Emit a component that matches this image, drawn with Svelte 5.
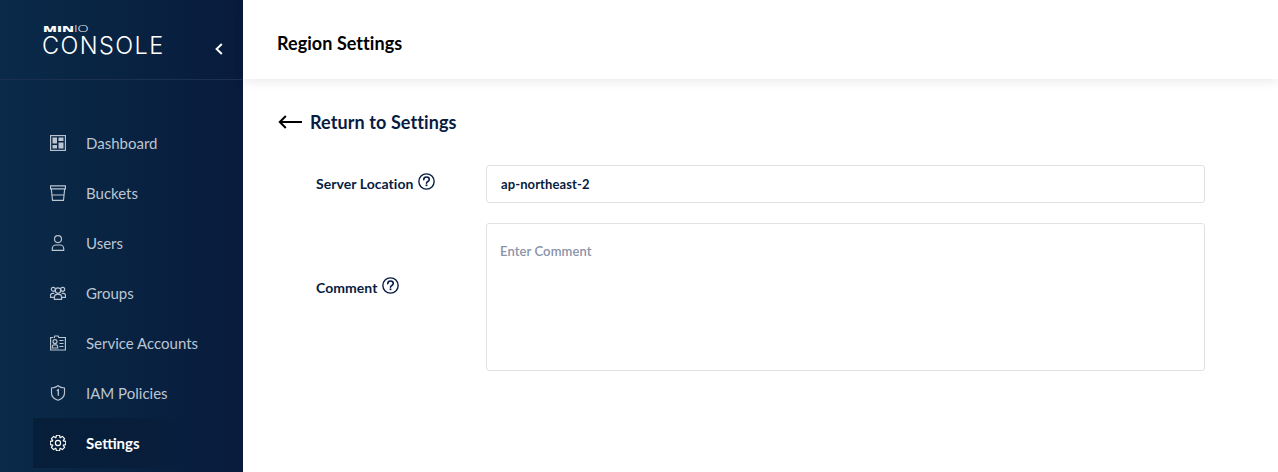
<script>
  const menu = [
    { label: 'Dashboard', icon: 'dashboard' },
    { label: 'Buckets', icon: 'buckets' },
    { label: 'Users', icon: 'users' },
    { label: 'Groups', icon: 'groups' },
    { label: 'Service Accounts', icon: 'accounts' },
    { label: 'IAM Policies', icon: 'policies' },
    { label: 'Settings', icon: 'settings', active: true }
  ];

  // eight rounded teeth round the settings cog
  const gear = (() => {
    const pts = [];
    for (let i = 0; i < 8; i++) {
      const a = (i * Math.PI) / 4;
      for (const [r, d] of [[5.6, -0.39], [7.9, -0.2], [7.9, 0.2], [5.6, 0.39]]) {
        const x = 8 + r * Math.sin(a + d);
        const y = 8 - r * Math.cos(a + d);
        pts.push(`${x.toFixed(2)} ${y.toFixed(2)}`);
      }
    }
    return 'M' + pts.join('L') + 'Z';
  })();
</script>

{#snippet help()}
  <svg class="help" viewBox="0 0 16 16" width="17" height="17" fill="none" stroke="#081c42" stroke-width="1.3">
    <circle cx="8" cy="8" r="7.2" />
    <path d="M5.400 6.300c0-1.500 1.100-2.500 2.600-2.500s2.600.9 2.600 2.300c0 2-2.600 1.800-2.600 3.600" stroke-linecap="round" stroke-width="1.500" />
    <path d="M8 10.800v1.600" stroke-width="1.700" />
  </svg>
{/snippet}

<div class="page">
  <aside class="sidebar">
    <div class="brand">
      <div class="logo">
        <div class="minio"><b>MIN</b>IO</div>
        <div class="console">CONSOLE</div>
      </div>
      <svg class="collapse" viewBox="0 0 8 12" width="8" height="12" fill="none" stroke="#fff" stroke-width="2">
        <path d="M6.800 1 1.600 6l5.200 5" />
      </svg>
    </div>
    <nav class="menu">
      {#each menu as item}
        <div class="item" class:active={item.active}>
          <svg class="icon" viewBox="0 0 16 16" width="16" height="16" fill="none" stroke="currentColor" stroke-width="1.150">
            {#if item.icon === 'dashboard'}
              <rect x=".6" y=".6" width="14.800" height="14.800" />
              <rect x="2.500" y="2.500" width="4.500" height="6" fill="currentColor" stroke="none" />
              <rect x="8.500" y="2.500" width="5" height="3.500" fill="currentColor" stroke="none" />
              <rect x="2.500" y="10" width="4.500" height="3.500" fill="currentColor" stroke="none" />
              <rect x="8.500" y="7.500" width="5" height="6" fill="currentColor" stroke="none" />
            {:else if item.icon === 'buckets'}
              <path d="M.6.800h14.800v3H.6zM1.300 3.800l1.200 11.600h11l1.200-11.600M2 10h12" />
            {:else if item.icon === 'users'}
              <circle cx="8" cy="4.100" r="3.500" />
              <path d="M2.300 15.400v-1.800c0-2 1.600-3.600 3.500-3.600h4.400c1.900 0 3.500 1.600 3.500 3.600v1.800z" />
            {:else if item.icon === 'groups'}
              <circle cx="8" cy="5.600" r="2.700" />
              <circle cx="3.300" cy="4.300" r="2" />
              <circle cx="12.700" cy="4.300" r="2" />
              <path d="M4.400 14.300v-2.100c0-1.600 1.200-2.800 2.700-2.800h1.800c1.500 0 2.700 1.200 2.700 2.800v2.100zM4.300 8.400H2.500C1.300 8.400.5 9.300.5 10.500v1.800h3.800M11.700 8.400h1.800c1.200 0 2 .9 2 2.100v1.800h-3.800" />
            {:else if item.icon === 'accounts'}
              <path d="M5 2.500H4.200L4.800 1h3.400l.6 1.500H15.400v12.500H.6V2.500H3" />
              <circle cx="5" cy="6.600" r="2" />
              <path d="M2.300 13v-1.300c0-1 .8-1.800 1.800-1.800h1.800c1 0 1.800.8 1.800 1.800V13zM9.500 5.500h4M9.500 8.500h4M9.500 11.500h4" />
            {:else if item.icon === 'policies'}
              <path d="M8 .7c1.800 1.400 4 2.200 6.500 2.300v5c0 3.300-2.600 5.900-6.500 7.300C4.100 14 1.500 11.300 1.500 8V3C4 2.900 6.200 2.100 8 .7z" />
              <path d="M6.800 5.700l1.500-1v6" stroke-width="1.300" />
            {:else}
              <circle cx="8" cy="8" r="2.600" />
              <path d={gear} stroke-linejoin="round" />
            {/if}
          </svg>
          <span>{item.label}</span>
        </div>
      {/each}
    </nav>
  </aside>

  <main class="main">
    <header class="header">Region Settings</header>
    <section class="content">
      <div class="back">
        <svg viewBox="0 0 24 14" width="24" height="14" fill="none" stroke="#000" stroke-width="2">
          <path d="M24 7H1.800M7.800 1 1.800 7l6 6" />
        </svg>
        <span>Return to Settings</span>
      </div>
      <div class="form">
        <div class="row">
          <div class="label">Server Location {@render help()}</div>
          <div class="field input">ap-northeast-2</div>
        </div>
        <div class="row">
          <div class="label comment">Comment {@render help()}</div>
          <div class="field textarea">Enter Comment</div>
        </div>
      </div>
    </section>
  </main>
</div>

<style>
  :global(body) {
    margin: 0;
    background: #fff;
    overflow: hidden;
  }
  .page {
    display: flex;
    height: 472px;
    font-family: Lato, sans-serif;
    color: #081c42;
  }
  .sidebar {
    width: 243px;
    flex-shrink: 0;
    background: linear-gradient(90deg, #0a2a49 0%, #092241 55%, #081b3d 100%);
    overflow: hidden;
  }
  .brand {
    height: 79px;
    border-bottom: 1px solid #1c3052;
    display: flex;
    justify-content: space-between;
    padding: 0 20px 0 43px;
  }
  .logo {
    padding-top: 25px;
    color: #fff;
  }
  .minio {
    font-family: 'Open Sans', sans-serif;
    font-size: 9px;
    line-height: 8px;
    font-weight: 300;
    transform: scaleX(1.600);
    transform-origin: left;
  }
  .minio b {
    font-weight: 800;
  }
  .console {
    font-family: Inter, sans-serif;
    font-size: 23.500px;
    line-height: 17px;
    margin: 4px 0 0 -1px;
    font-weight: 300;
    letter-spacing: 1.400px;
  }
  .collapse {
    margin-top: 43px;
  }
  .menu {
    padding: 38px 0 0 33px;
    display: flex;
    flex-direction: column;
  }
  .item {
    height: 50px;
    display: flex;
    align-items: center;
    padding-left: 17px;
    gap: 20px;
    font-size: 15px;
    color: #bcc6d2;
  }
  .icon {
    flex-shrink: 0;
  }
  .item.active {
    color: #fff;
    font-weight: 700;
    background: linear-gradient(90deg, rgba(6, 26, 52, 0.7) 0%, rgba(6, 26, 52, 0.5) 70%, rgba(6, 26, 52, 0) 100%);
    width: 137px;
  }
  .main {
    flex: 1;
    min-width: 0;
  }
  .header {
    height: 73px;
    padding: 6px 0 0 34px;
    display: flex;
    align-items: center;
    font-size: 18px;
    font-weight: 700;
    letter-spacing: 0.05px;
    color: #000;
    box-shadow: 0 3px 10px rgba(0, 0, 0, 0.08);
  }
  .content {
    padding: 31px 0 0 35px;
  }
  .back {
    display: flex;
    align-items: center;
    gap: 8px;
    font-size: 18px;
    font-weight: 700;
    letter-spacing: 0.1px;
    height: 24px;
  }
  .form {
    margin-top: 31px;
    display: flex;
    flex-direction: column;
    gap: 20px;
    padding-left: 38px;
  }
  .row {
    display: grid;
    grid-template-columns: 170px 719px;
    align-items: center;
  }
  .label {
    font-size: 14px;
    font-weight: 700;
    letter-spacing: 0.05px;
    display: flex;
    align-items: center;
    gap: 4px;
    padding-bottom: 2px;
  }
  .comment {
    padding-bottom: 20px;
    gap: 5px;
  }
  .help {
    position: relative;
    top: -2px;
  }
  .field {
    box-sizing: border-box;
    border: 1px solid #e2e2e2;
    border-radius: 3px;
    font-size: 13px;
    letter-spacing: 0.1px;
  }
  .input {
    height: 38px;
    padding-left: 14px;
    display: flex;
    align-items: center;
    font-weight: 700;
  }
  .textarea {
    height: 148px;
    padding: 19px 13px;
    line-height: 16px;
    color: #8a93a8;
    font-weight: 600;
    letter-spacing: 0.1px;
  }
</style>
